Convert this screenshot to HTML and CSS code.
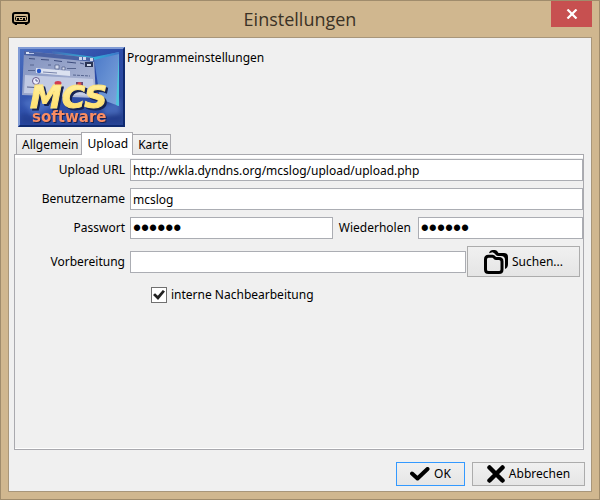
FILE: index.html
```html
<!DOCTYPE html>
<html lang="de">
<head>
<meta charset="utf-8">
<title>Einstellungen</title>
<link rel="stylesheet" href="styles.css">
</head>
<body>
<div class="window">
  <header class="titlebar">
    <svg class="app-icon" viewBox="0 0 18 13" aria-hidden="true">
      <rect x="1" y="1" width="16" height="10" rx="2" fill="none" stroke="#000" stroke-width="2"/>
      <rect x="3.5" y="4.5" width="11" height="4" rx="1" fill="none" stroke="#000"/>
      <path d="M5 6h2v2H5zM11 6h2v2h-2zM8 6h2v1H8zM2 11h3v2H3zM13 11h3l-1 2h-2zM6 11h6v1H6z"/>
    </svg>
    <h1 class="title">Einstellungen</h1>
    <button class="close" type="button" aria-label="Schließen">
      <svg viewBox="0 0 12 10" width="12" height="10" aria-hidden="true"><path d="M1.5 .5l9 9M10.5 .5l-9 9" stroke="#fff" stroke-width="2.2" fill="none"/></svg>
    </button>
  </header>
  <main class="client">
    <div class="intro">
      <svg class="logo" viewBox="0 0 107 80" role="img" aria-label="MCS software">
        <defs>
          <linearGradient id="sky" x1="0" y1="0" x2="1" y2="1">
            <stop offset="0" stop-color="#4a6fc0"/><stop offset=".5" stop-color="#2c4ca8"/><stop offset="1" stop-color="#2a4696"/>
          </linearGradient>
          <linearGradient id="beam" x1="0" y1="0" x2="1" y2="0">
            <stop offset="0" stop-color="#4468b4"/><stop offset=".6" stop-color="#2fb4d8"/><stop offset="1" stop-color="#3d74c8"/>
          </linearGradient>
          <linearGradient id="side" x1="0" y1="0" x2="1" y2="1">
            <stop offset="0" stop-color="#4b78c8"/><stop offset="1" stop-color="#7fa6dc"/>
          </linearGradient>
          <linearGradient id="pane" x1="0" y1="0" x2="1" y2="1">
            <stop offset="0" stop-color="#7f90bd"/><stop offset="1" stop-color="#b3bcd9"/>
          </linearGradient>
          <linearGradient id="gold" x1="0" y1="0" x2="0" y2="1">
            <stop offset="0" stop-color="#fff2a8"/><stop offset="1" stop-color="#ffdc60"/>
          </linearGradient>
          <filter id="soft"><feGaussianBlur stdDeviation="2"/></filter>
        </defs>
        <rect width="107" height="80" fill="url(#sky)"/>
        <g filter="url(#soft)" opacity=".5">
          <path d="M4 55l20-8 12 12-20 10zM84 60l18-8v16l-14 4z" fill="#5f86d4"/>
          <path d="M2 66l26 4-8 8H2zM70 70l34-4v10H74z" fill="#1c3480"/>
        </g>
        <path d="M76 11l25-6v54l-19-7z" fill="url(#side)"/>
        <path d="M34 4l42 6 25-5v2L76 13 34 7z" fill="url(#beam)"/>
        <path d="M101 6v53l-3-1z" fill="#4fc3dc"/>
        <path d="M6 4l70 7 2 40-74-3z" fill="url(#pane)"/>
        <path d="M6 4l70 7v4L6 8z" fill="#4a62a4"/>
        <path d="M8 5h3v2H8z" fill="#dbe4f5"/>
        <path d="M11 6.500h5" stroke="#b9c6e6"/>
        <path d="M61 10h3v3h-3zM65 10h3v3h-3zM72 11h3v3h-3z" fill="#cdd6ec"/>
        <path d="M11 11.500l6 .5M23 12.500l8 .5M36 13.500l8 1M49 15l9 1M62 16l4 1" stroke="#3d4c7c" fill="none"/>
        <path d="M67 15h8v5h-8z" fill="#2a3454"/><path d="M69 17h4v2h-4z" fill="#cfd8eb"/>
        <path d="M12 18h4M30 18h3" stroke="#56658f"/>
        <path d="M37 18h4v4h-4zM44 20h3v3h-3z" fill="#d4dbed" stroke="#4c5985" stroke-width=".7"/>
        <path d="M49 21.500h9" stroke="#56658f"/>
        <path d="M10 23.500h7" stroke="#56658f"/>
        <path d="M18 21l34 3v5l-34-3z" fill="#dbe1f0"/>
        <circle cx="21" cy="24" r="2.200" fill="#2656c8"/>
        <path d="M25 25l14 1" stroke="#7783aa"/>
        <path d="M55 28l17 1" stroke="#56658f" stroke-dasharray="3 1"/>
        <path d="M7 28l68 4 2 17-71-3z" fill="#ccd3e8" opacity=".8"/>
        <circle cx="18" cy="34" r="3.500" fill="#eef" stroke="#655889"/>
        <path d="M18 32v2h2M9 40l17 1M34 41h12M54 43h15" stroke="#59638b" fill="none"/>
        <path d="M37 36h6v3h-6z" fill="#8f3350"/><ellipse cx="40" cy="36" rx="3.500" ry="2" fill="#d13d4f"/>
        <path d="M58 35h7v5h-7z" fill="#6d4770"/><circle cx="61.500" cy="37" r="2" fill="#da4a4c"/>
        <path d="M76 46h4v3h-4z" fill="#c9254a"/>
        <text class="logo-main" x="12" y="61" fill="url(#gold)">MCS</text>
        <text class="logo-sub" x="14" y="75">software</text>
        <path d="M0 0h107l-2 2H2v76l-2 2z" fill="#809bd5"/>
        <path d="M107 0v80H0l2-2h103V2z" fill="#0f2a70"/>
      </svg>
      <span class="intro-text">Programmeinstellungen</span>
    </div>
    <div class="tabs" role="tablist">
      <button class="tab" type="button" role="tab">Allgemein</button>
      <button class="tab tab-active" type="button" role="tab" aria-selected="true">Upload</button>
      <button class="tab" type="button" role="tab">Karte</button>
    </div>
    <form class="panel">
      <div class="row">
        <label class="label" for="url">Upload URL</label>
        <input class="field" id="url" type="text" value="http://wkla.dyndns.org/mcslog/upload/upload.php">
      </div>
      <div class="row">
        <label class="label" for="user">Benutzername</label>
        <input class="field" id="user" type="text" value="mcslog">
      </div>
      <div class="row">
        <label class="label" for="pass">Passwort</label>
        <input class="field field-pass" id="pass" type="password" value="mcslog">
        <label class="label-repeat" for="repeat">Wiederholen</label>
        <input class="field field-repeat" id="repeat" type="password" value="mcslog">
      </div>
      <div class="row">
        <label class="label" for="prep">Vorbereitung</label>
        <input class="field" id="prep" type="text">
        <button class="button search" type="button">
          <svg viewBox="0 0 24 24" width="24" height="24" aria-hidden="true">
            <path d="M1.500 10v9.500q0 3 3 3h10.500q3 0 3-3V11.500q0-3-3-3H12q-1 0-1.500-1T8.500 6.300H4.500q-3 0-3 3z" fill="none" stroke="#000" stroke-width="3"/>
            <path d="M5 3.200Q6 0 9 0h2q2 0 3.500 3H20q4 0 4 4v7q0 4-3 5v-9q0-4-4-4h-2.500q-2 0-3-1.500T8.500 2.200z"/>
          </svg>
          Suchen...
        </button>
      </div>
      <label class="check"><input class="checkbox" type="checkbox" checked> interne Nachbearbeitung</label>
    </form>
    <footer class="actions">
      <button class="button ok" type="button">
        <svg viewBox="0 0 20 14" width="20" height="14" aria-hidden="true"><path d="M2 6.500l5.500 5L17.500 2" fill="none" stroke="#000" stroke-width="4" stroke-linecap="round" stroke-linejoin="round"/></svg>
        OK
      </button>
      <button class="button cancel" type="button">
        <svg viewBox="0 0 18 18" width="18" height="18" aria-hidden="true"><path d="M2.500 2.500l13 13M15.500 2.500l-13 13" stroke="#000" stroke-width="4.500" stroke-linecap="round"/></svg>
        Abbrechen
      </button>
    </footer>
  </main>
</div>
</body>
</html>
```
FILE: styles.css
```css
* { box-sizing: border-box; }

body {
  margin: 0;
  color: #000;
  font: 12px/16px "Noto Sans", "DejaVu Sans Condensed", sans-serif;
}

button, input { font: inherit; color: inherit; }

.window {
  display: flex;
  flex-direction: column;
  min-height: 100vh;
  padding: 0 7px 7px;
  border: 1px solid #a08c6c;
  background: #d0b78f;
}

.titlebar {
  display: grid;
  grid-template-columns: 41px 1fr 41px;
  align-items: start;
  height: 36px;
}

.app-icon { width: 18px; height: 13px; margin: 11px 0 0 4px; }

.title {
  margin: 6px 0 0;
  color: #3b3226;
  font: 18px/24px "Open Sans", "Noto Sans", sans-serif;
  text-align: center;
}

.close {
  display: flex;
  align-items: center;
  justify-content: center;
  height: 26px;
  padding: 0;
  border: 0;
  background: #c75050;
}

.client {
  display: flex;
  flex: 1;
  flex-direction: column;
  padding: 9px 6px 5px 5px;
  border: 1px solid #a8967a;
  background: #f0f0f0;
}

.intro { display: flex; gap: 2px; padding-left: 4px; }
.logo { width: 107px; height: 80px; }
.intro-text { padding-top: 3px; }

.logo-main {
  font: italic bold 32px/1 "DejaVu Sans", sans-serif;
  stroke: #ffe47c;
  stroke-width: 1px;
  filter: drop-shadow(2px 2px 0 #142251);
}
.logo-sub {
  font: bold 15px/1 "DejaVu Sans", sans-serif;
  fill: #fa8d62;
  filter: drop-shadow(1px 1px 0 #182151);
}

.tabs {
  display: flex;
  align-items: flex-end;
  height: 27px;
  padding-left: 2px;
}

.tab {
  height: 20px;
  padding: 0 2px 0 5px;
  border: 1px solid #a9a9ae;
  border-bottom: 0;
  background: linear-gradient(#f2f2f2, #e8e8e8);
}

.tab-active {
  position: relative;
  z-index: 1;
  height: 23px;
  margin: 0 -1px -1px;
  padding: 0 4px 1px 6px;
  background: #fff;
}

.panel {
  display: flex;
  flex: 1;
  flex-direction: column;
  gap: 7px;
  margin-right: 1px;
  padding-top: 4px;
  border: 1px solid #a9a9ae;
  background: linear-gradient(#fff 3px, #f0f0f0 3px);
  box-shadow: inset 0 -1px #fff;
}

.row { display: flex; align-items: center; }
.label { width: 115px; padding-right: 5px; text-align: right; }

.field {
  flex: 1;
  min-width: 0;
  height: 22px;
  padding: 0 2px;
  border: 1px solid #abadb3;
  background: #fff;
}
.field-pass { flex: 204; }
.field-repeat { flex: 165; }
.field-pass, .field-repeat { font: 23px/20px "Liberation Sans", sans-serif; }
.label-repeat { width: 85px; padding-left: 6px; }

.button {
  display: flex;
  align-items: center;
  justify-content: center;
  gap: 4px;
  height: 24px;
  padding: 0;
  border: 1px solid #acacac;
  background: linear-gradient(#f0f0f0, #e5e5e5);
}

.search { width: 113px; height: 31px; margin: 0 3px 0 1px; }

.check {
  display: flex;
  align-items: center;
  align-self: flex-start;
  gap: 4px;
  margin: 3px 0 0 136px;
}

.checkbox {
  display: grid;
  place-content: center;
  width: 16px;
  height: 16px;
  margin: 0;
  border: 1px solid #707070;
  background: #fff;
  appearance: none;
}
.checkbox:checked::before {
  content: "";
  width: 12px;
  height: 10px;
  background: #212121;
  clip-path: polygon(0 50%, 17% 32%, 40% 58%, 82% 0, 100% 16%, 42% 100%);
}

.actions {
  display: flex;
  justify-content: flex-end;
  gap: 7px;
  padding-top: 12px;
}
.ok { width: 69px; border-color: #3399ff; }
.cancel { width: 113px; }
```
